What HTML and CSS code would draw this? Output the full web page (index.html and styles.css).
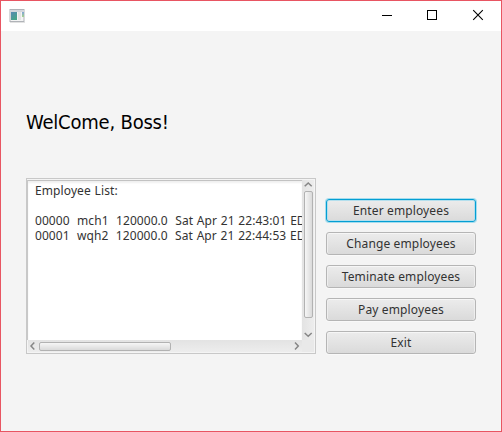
FILE: index.html
```html
<!DOCTYPE html>
<html lang="en">
<head>
<meta charset="utf-8">
<title>Employees</title>
<link rel="stylesheet" href="styles.css">
</head>
<body>
<div class="window">
  <header class="titlebar">
    <svg class="app-icon" width="16" height="14" viewBox="0 0 16 14">
      <defs>
        <linearGradient id="pane" x1="0" y1="0" x2="0.6" y2="1"><stop offset="0" stop-color="#5789b4"/><stop offset="1" stop-color="#46a487"/></linearGradient>
        <linearGradient id="side" x1="0" y1="0" x2="0" y2="1"><stop offset="0" stop-color="#7fa3d8"/><stop offset="1" stop-color="#a5d48c"/></linearGradient>
      </defs>
      <rect x="1" y="0.5" width="14" height="12" fill="#f4f4f4" stroke="#b0b3b8"/>
      <rect x="1" y="1" width="14" height="2" fill="#d3d6dc"/>
      <rect x="2" y="3" width="6" height="8" fill="url(#pane)"/>
      <rect x="9" y="3" width="3" height="8" fill="#e4e4e4"/>
      <rect x="13" y="3" width="2" height="5" fill="url(#side)"/>
      <rect x="1" y="13" width="15" height="1" fill="#e2e2e2"/>
    </svg>
    <svg class="controls" width="102" height="12" viewBox="0 0 102 12" fill="none" stroke="#000">
      <path d="M0 6.5H10" shape-rendering="crispEdges"/>
      <rect x="45.5" y="1.5" width="9" height="9" shape-rendering="crispEdges"/>
      <path d="M91.2 1.2L100.8 10.8M100.8 1.2L91.2 10.8" stroke-width="1.1"/>
    </svg>
  </header>
  <main class="content">
    <h1 class="welcome">WelCome, Boss!</h1>
    <div class="row">
      <section class="list">
        <div class="text">
          <p class="line heading">Employee List:</p>
          <p class="line">00000  mch1  120000.0  Sat Apr 21 22:43:01 EDT</p>
          <p class="line">00001  wqh2  120000.0  Sat Apr 21 22:44:53 EDT</p>
        </div>
        <div class="vbar">
          <svg width="13" height="11" viewBox="0 0 13 11"><path d="M2.7 6.3L6.2 3L9.7 6.3" /></svg>
          <div class="vthumb"></div>
          <svg width="13" height="11" viewBox="0 0 13 11"><path d="M2.7 4L6.2 7.3L9.7 4" /></svg>
        </div>
        <div class="hbar">
          <svg width="11" height="12" viewBox="0 0 11 12"><path d="M6.3 2.5L3 6L6.3 9.5" /></svg>
          <div class="hthumb"></div>
          <svg class="right" width="11" height="12" viewBox="0 0 11 12"><path d="M4 2.5L7.3 6L4 9.5" /></svg>
        </div>
        <div class="corner"></div>
      </section>
      <nav class="buttons">
        <button class="btn focused">Enter employees</button>
        <button class="btn">Change employees</button>
        <button class="btn">Teminate employees</button>
        <button class="btn">Pay employees</button>
        <button class="btn">Exit</button>
      </nav>
    </div>
  </main>
</div>
</body>
</html>
```
FILE: styles.css
```css
* { box-sizing: border-box; }
body { margin: 0; font-family: "Noto Sans", "Open Sans", sans-serif; color: #333; overflow: hidden; }
.window { width: 502px; height: 432px; border: 1px solid #e85562; background: #f4f4f4; }
.titlebar { height: 30px; background: #fff; display: flex; justify-content: space-between; padding: 8px 17px 0 8px; }
.app-icon, .controls { display: block; }
.content { padding: 77px 25px 0; }
.welcome { margin: 0; height: 70px; font: 400 20px/28px "DejaVu Sans Condensed", "DejaVu Sans", sans-serif; font-stretch: condensed; color: #000; white-space: nowrap; letter-spacing: -0.2px; }
.row { display: flex; align-items: flex-end; gap: 10px; }
.list { width: 290px; height: 176px; border: 1px solid #c8c8c8; padding: 1px; background: #f4f4f4; display: grid; grid-template: 160px 12px / 274px 12px; }
.text { background: #fff; border-top: 1px solid #c2c2c2; box-shadow: inset 0 2px 2px #f0f0f0, -1px 0 #c8c8c8; overflow: hidden; padding: 2px 0 0 7px; }
.line { margin: 0; font: 12px/15px "Noto Sans", sans-serif; white-space: pre; letter-spacing: 0.06px; word-spacing: 0.55px; }
.heading { margin-bottom: 15px; letter-spacing: 0.1px; }
.vbar { background: linear-gradient(90deg, #e3e3e3, #ededed); display: flex; flex-direction: column; }
.hbar { background: linear-gradient(#e3e3e3, #ededed); display: flex; align-items: center; }
.vbar svg, .hbar svg { display: block; flex: none; fill: none; stroke: #868686; stroke-width: 1.5; }
.vthumb { width: 9px; height: 127px; margin: 0 0 11px 2px; border: 1px solid #b2b2b2; border-radius: 2px; background: linear-gradient(90deg, #f6f6f6, #dadada); }
.hthumb { width: 132px; height: 9px; border: 1px solid #b2b2b2; border-radius: 2px; background: linear-gradient(#f6f6f6, #dadada); }
.right { margin-left: auto; }
.corner { background: #e9e9e9; }
.buttons { width: 150px; display: flex; flex-direction: column; gap: 10px; }
.btn { height: 23px; padding: 0; border: 1px solid #b5b5b5; border-radius: 3px; background: linear-gradient(#ececec, #dadada); box-shadow: inset 0 1px #f6f6f6, inset 1px 0 #eee, inset -1px 0 #eee, 0 1px #f9f9f9; font: 12px/21px "Noto Sans", sans-serif; letter-spacing: 0.13px; color: #333; white-space: nowrap; }
.focused { border-color: #039ed3; box-shadow: inset 0 0 0 1px #b4dfed, 0 0 0 1px #a5dced; }
```
